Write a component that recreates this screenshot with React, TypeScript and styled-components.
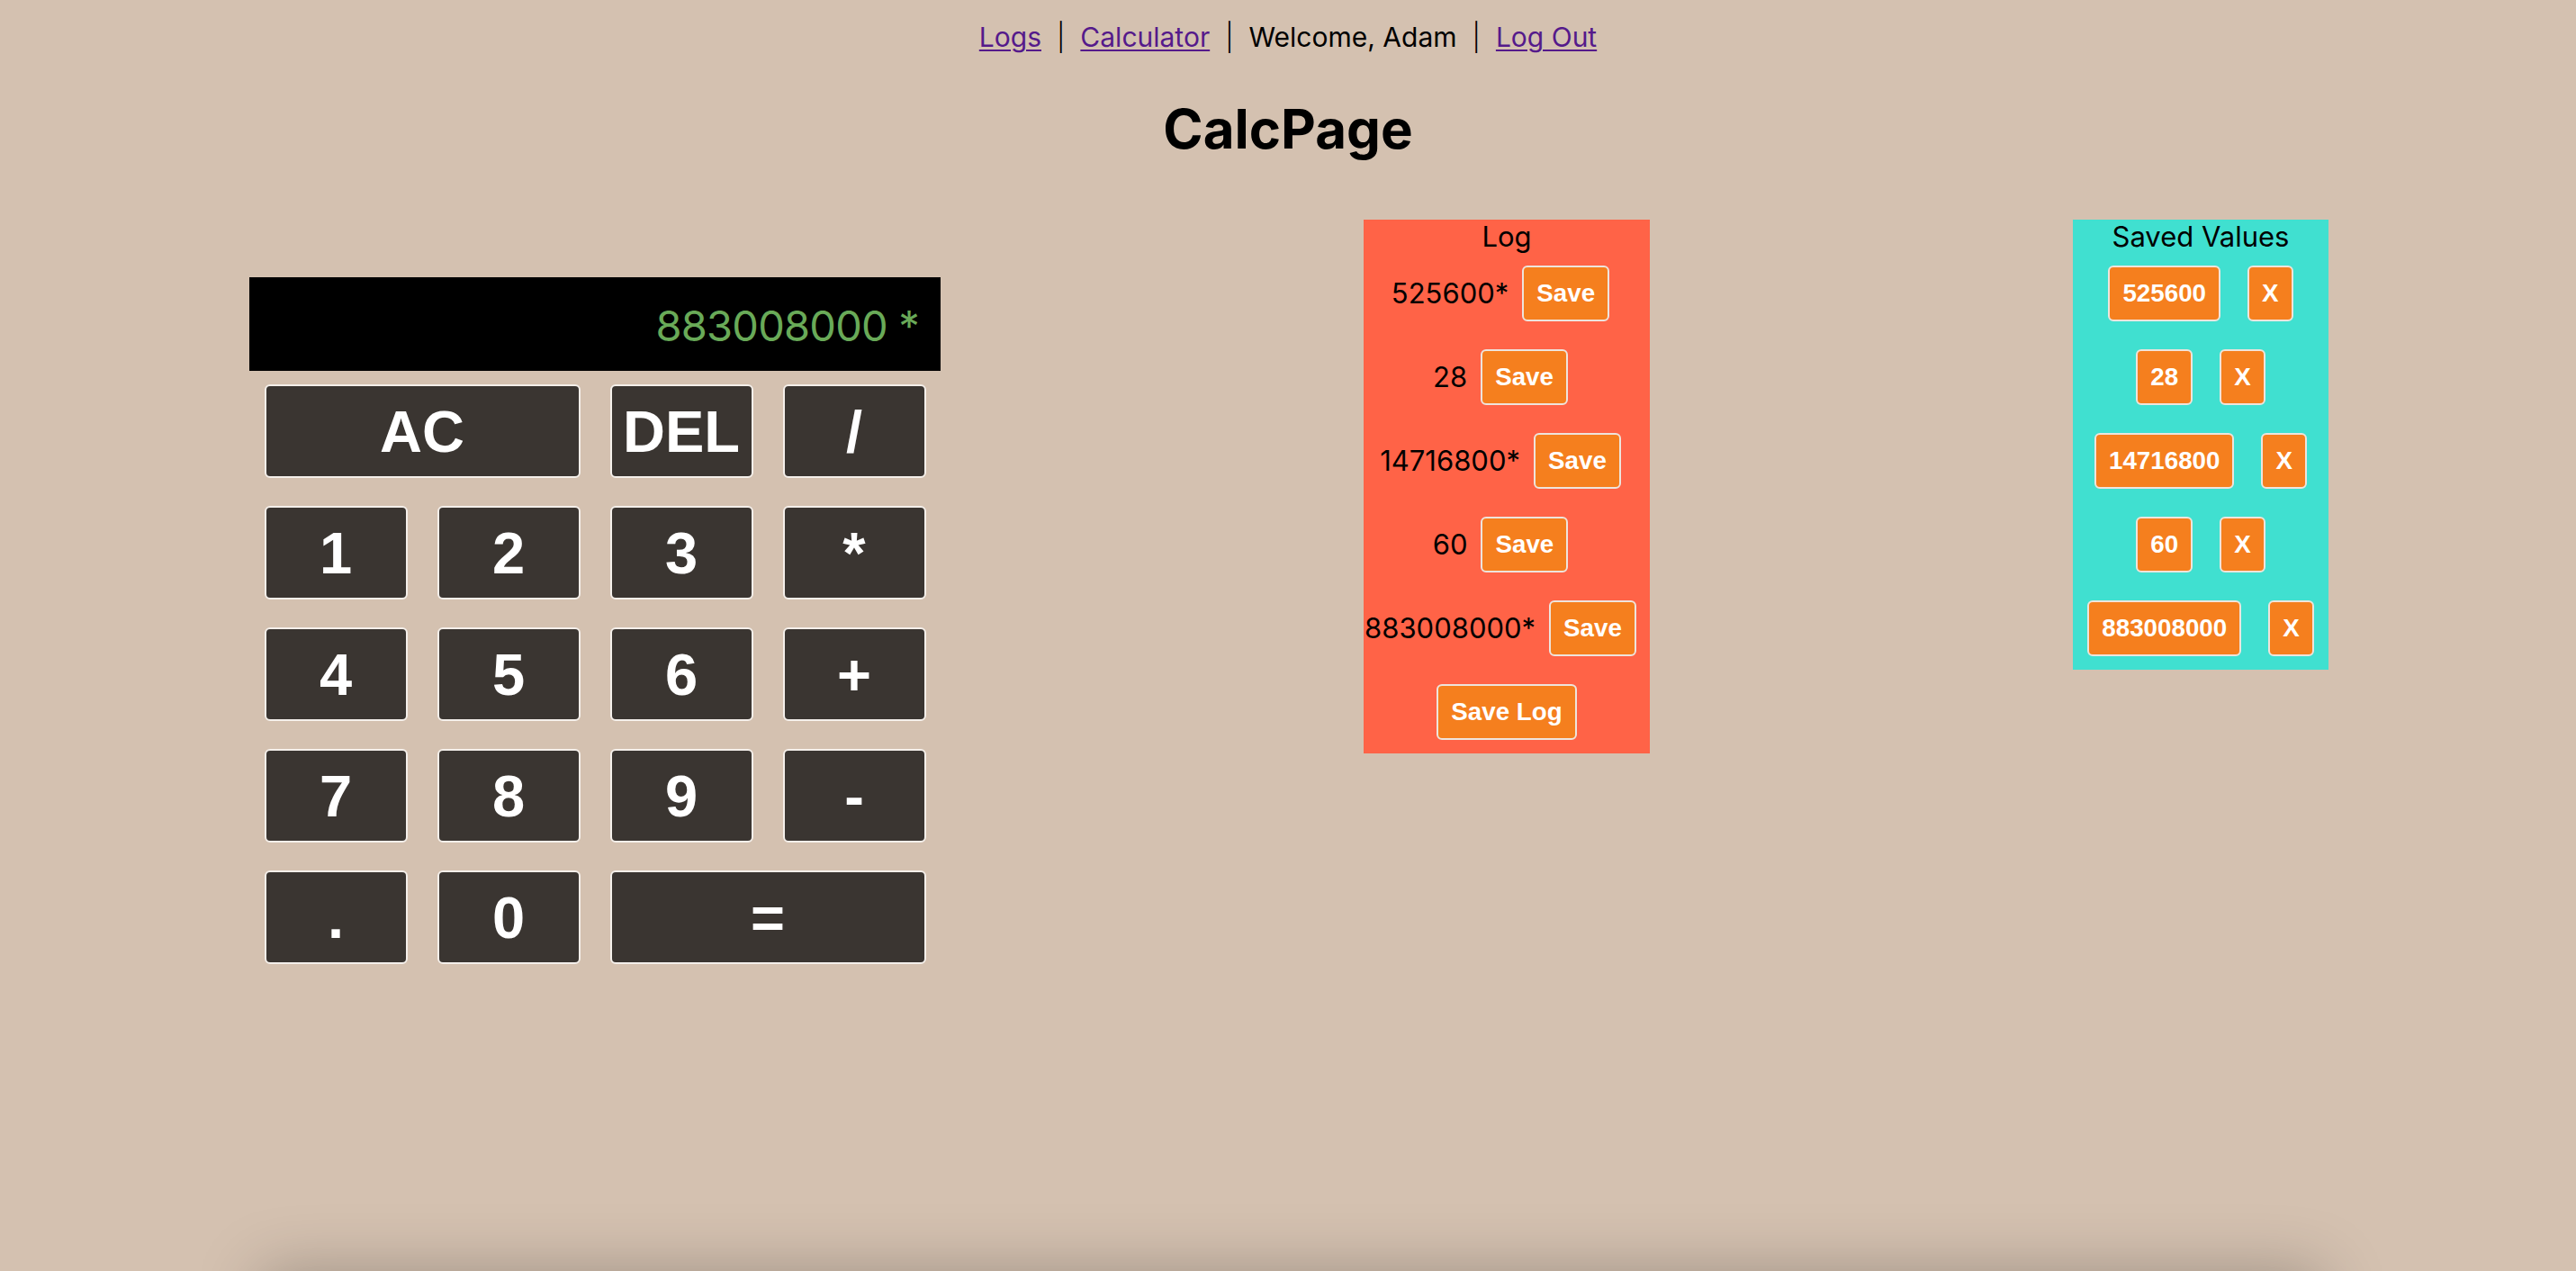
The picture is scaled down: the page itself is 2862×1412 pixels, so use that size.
import React from "react";
import styled, { createGlobalStyle } from "styled-components";

const GlobalStyle = createGlobalStyle`
  html, body {
    margin: 0;
    padding: 0;
    background: #d4c1b0;
  }
  body {
    font-family: Inter, "Noto Sans", sans-serif;
    color: #000;
    overflow: hidden;
  }
`;

const Page = styled.div`
  min-height: 100vh;
`;

const Nav = styled.nav`
  display: flex;
  justify-content: center;
  align-items: baseline;
  gap: 17px;
  padding-top: 23px;
  font-size: 30px;
  line-height: 36px;
`;

const NavLink = styled.a`
  color: #551a8b;
  text-decoration: underline;
  text-decoration-thickness: 2px;
  text-underline-offset: 3px;
  cursor: pointer;
`;

const Sep = styled.span`
  color: #000;
  font-weight: 300;
`;

const Title = styled.h1`
  margin: 48px 0 0;
  text-align: center;
  font-size: 60px;
  line-height: 72px;
  font-weight: 700;
`;

const Main = styled.main`
  display: flex;
  justify-content: space-around;
  align-items: flex-start;
  padding: 0 40px 0 42px;
  margin-top: 65px;
`;

const Calculator = styled.div`
  width: 768px;
  padding-top: 64px;
  display: flex;
  flex-direction: column;
  gap: 15px;
`;

const Display = styled.div`
  box-sizing: border-box;
  height: 104px;
  background: #000;
  color: #69aa58;
  font-family: Inter, "Noto Sans", sans-serif;
  font-size: 47px;
  letter-spacing: -0.8px;
  line-height: 100px;
  padding: 4px 24px 0;
  text-align: right;
  white-space: nowrap;
`;

const Keypad = styled.div`
  display: grid;
  grid-template-columns: repeat(4, 159px);
  grid-auto-rows: 104px;
  column-gap: 33px;
  row-gap: 31px;
  justify-content: center;
`;

const Key = styled.button<{ $span?: number }>`
  grid-column: span ${(p) => p.$span ?? 1};
  box-sizing: border-box;
  background: #3a3531;
  color: #fff;
  border: 2px solid #f4efea;
  border-radius: 6px;
  font-family: "Liberation Sans", Arial, sans-serif;
  font-weight: 700;
  font-size: 65px;
  line-height: 1;
  padding: 0;
  cursor: pointer;
`;

const Panel = styled.section<{ $bg: string; $w: number }>`
  width: ${(p) => p.$w}px;
  background: ${(p) => p.$bg};
  display: flex;
  flex-direction: column;
  padding-bottom: 15px;
`;

const PanelTitle = styled.div`
  text-align: center;
  font-size: 31px;
  line-height: 38px;
  margin-bottom: 13px;
`;

const List = styled.div`
  display: flex;
  flex-direction: column;
  gap: 31px;
`;

const LogRow = styled.div`
  display: flex;
  justify-content: center;
  align-items: center;
  gap: 15px;
  padding-right: 14px;
  font-size: 31px;
  line-height: 38px;
  white-space: nowrap;
`;

const CenterRow = styled.div`
  display: flex;
  justify-content: center;
  align-items: center;
`;

const SavedRow = styled.div`
  display: flex;
  justify-content: center;
  align-items: center;
  gap: 30px;
`;

const ActionButton = styled.button`
  box-sizing: border-box;
  height: 62px;
  padding: 0 14px;
  background: #f57f1e;
  color: #fff;
  border: 2px solid #eee4dc;
  border-radius: 6px;
  font-family: "Liberation Sans", Arial, sans-serif;
  font-weight: 700;
  font-size: 27.75px;
  line-height: 1;
  cursor: pointer;
  white-space: nowrap;
`;

const BottomShade = styled.div`
  position: fixed;
  top: 100%;
  left: 290px;
  right: 282px;
  height: 200px;
  box-shadow: 0 0 70px 0 rgba(0, 0, 0, 0.25);
  pointer-events: none;
`;

const logEntries = ["525600*", "28", "14716800*", "60", "883008000*"];
const savedValues = ["525600", "28", "14716800", "60", "883008000"];

const keys: { label: string; span?: number }[] = [
  { label: "AC", span: 2 },
  { label: "DEL" },
  { label: "/" },
  { label: "1" },
  { label: "2" },
  { label: "3" },
  { label: "*" },
  { label: "4" },
  { label: "5" },
  { label: "6" },
  { label: "+" },
  { label: "7" },
  { label: "8" },
  { label: "9" },
  { label: "-" },
  { label: "." },
  { label: "0" },
  { label: "=", span: 2 },
];

export default function App() {
  return (
    <Page>
      <GlobalStyle />
      <Nav>
        <NavLink>Logs</NavLink>
        <Sep>|</Sep>
        <NavLink>Calculator</NavLink>
        <Sep>|</Sep>
        <span>Welcome, Adam</span>
        <Sep>|</Sep>
        <NavLink>Log Out</NavLink>
      </Nav>
      <Title>CalcPage</Title>
      <Main>
        <Calculator>
          <Display>883008000 *</Display>
          <Keypad>
            {keys.map((k) => (
              <Key key={k.label} $span={k.span}>
                {k.label}
              </Key>
            ))}
          </Keypad>
        </Calculator>
        <Panel $bg="#ff6347" $w={318}>
          <PanelTitle>Log</PanelTitle>
          <List>
            {logEntries.map((e) => (
              <LogRow key={e}>
                <span>{e}</span>
                <ActionButton>Save</ActionButton>
              </LogRow>
            ))}
            <CenterRow>
              <ActionButton>Save Log</ActionButton>
            </CenterRow>
          </List>
        </Panel>
        <Panel $bg="#40e0d0" $w={284}>
          <PanelTitle>Saved Values</PanelTitle>
          <List>
            {savedValues.map((v) => (
              <SavedRow key={v}>
                <ActionButton>{v}</ActionButton>
                <ActionButton>X</ActionButton>
              </SavedRow>
            ))}
          </List>
        </Panel>
      </Main>
      <BottomShade />
    </Page>
  );
}
